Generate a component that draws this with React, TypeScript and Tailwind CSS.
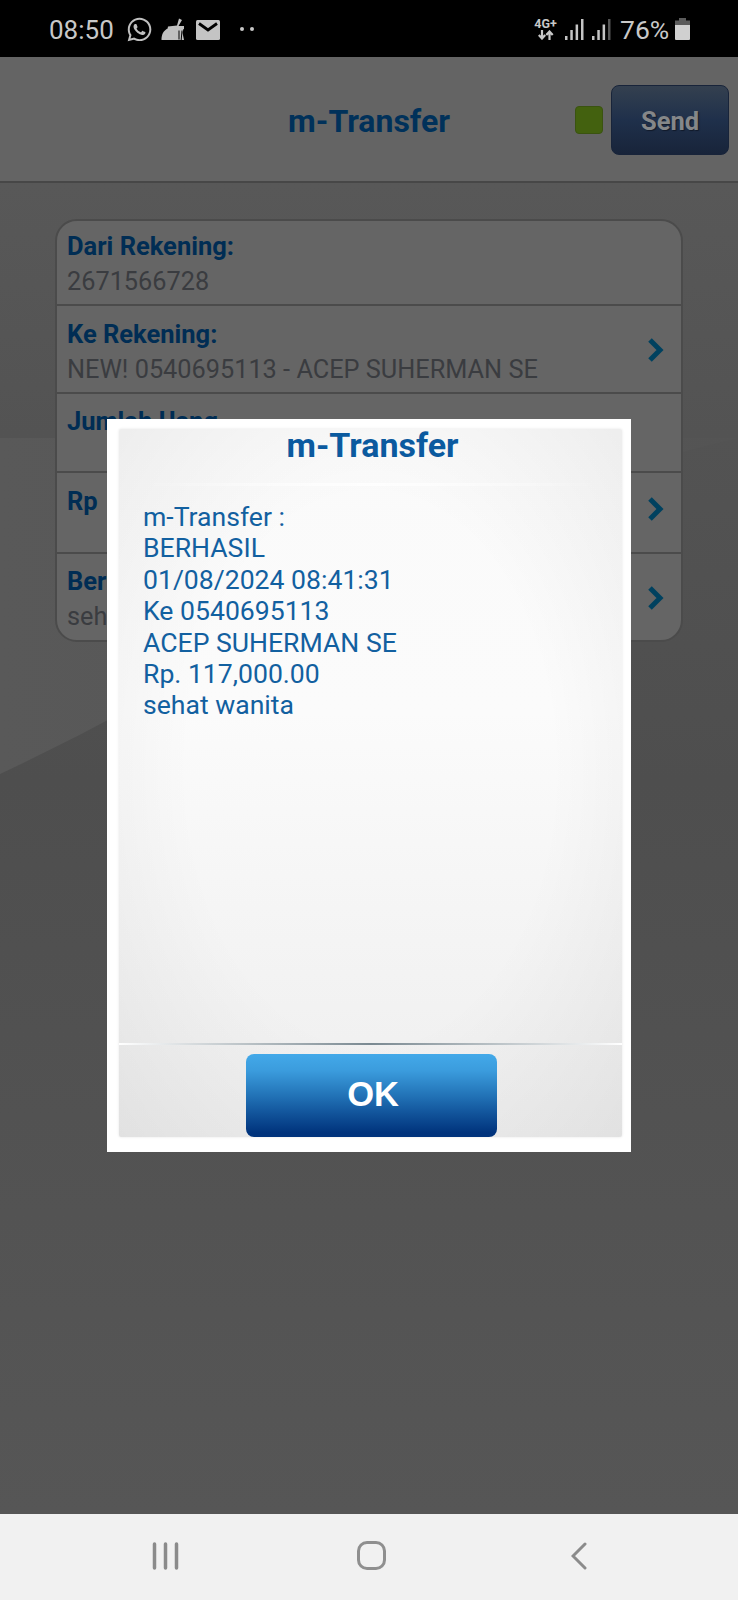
import React from "react";
import { FaWhatsapp } from "react-icons/fa";

interface FormRow {
    label: string;
    value?: string;
    layout: string;
    arrow?: string;
}

const rows: FormRow[] = [
    { label: "Dari Rekening:", value: "2671566728", layout: "h-[85px] pt-2" },
    { label: "Ke Rekening:", value: "NEW! 0540695113 - ACEP SUHERMAN SE", layout: "h-[88px] pt-[11px]", arrow: "mt-[21px]" },
    { label: "Jumlah Uang", layout: "h-[79px] pt-[10px]" },
    { label: "Rp", layout: "h-[81px] pt-[11px]", arrow: "mt-[13px]" },
    { label: "Berita:", value: "sehat wanita", layout: "h-[86px] pt-[10px]", arrow: "mt-[22px]" },
];

const messageLines = [
    "m-Transfer :",
    "BERHASIL",
    "01/08/2024 08:41:31",
    "Ke 0540695113",
    "ACEP SUHERMAN SE",
    "Rp. 117,000.00",
    "sehat wanita",
];

const StatusBar: React.FC = () => (
    <div className="h-[57px] shrink-0 bg-black flex items-center pl-[49px] pr-[48px] pt-[3px] text-[#c8c8c8] text-[26px]">
        <span className="w-[77px]">08:50</span>
        <FaWhatsapp className="size-[27px] mb-px text-[#c0c0c0]" />
        <svg className="ml-[8px] mr-[11px] w-6 h-6" viewBox="0 0 24 24" fill="#c0c0c0">
            <path d="M18 0.500l3 1.500-3.500 6H23v3H6.500l0.500-2.500 9-1z" />
            <path d="M6 10.800h16.500l-1 4 1.500 7.200H0.500c0-5.500 2-9 5.500-11.200z" />
            <path d="M18 12.500v9M21 12.500l-0.800 9.500" stroke="#000" strokeWidth="1" fill="none" />
        </svg>
        <svg className="w-6 h-5" viewBox="0 0 24 20">
            <rect width="24" height="20" rx="1.500" fill="#c4c4c4" />
            <path d="M3 3.500l9 6.500 9-6.500" fill="none" stroke="#000" strokeWidth="2.800" />
        </svg>
        <svg className="ml-5 mb-[3px] w-4 h-1" viewBox="0 0 16 4" fill="#c8c8c8">
            <circle cx="2" cy="2" r="2" />
            <circle cx="12" cy="2" r="2" />
        </svg>
        <div className="ml-auto flex items-center">
            <div className="w-[23px] mb-[3px] flex flex-col items-center">
                <span className="text-[12.5px] leading-[12px] font-bold">4G+</span>
                <svg className="w-4 h-[10px]" viewBox="0 0 16 10" fill="none" stroke="#c8c8c8" strokeWidth="2.200">
                    <path d="M4 0v8M0.800 5l3.200 3.500 3.200-3.500M11.500 10V2M8.300 5l3.200-3.500 3.200 3.500" />
                </svg>
            </div>
            <svg className="ml-2 mr-px mb-[2px] w-[46px] h-[21px]" viewBox="0 0 46 21" fill="#c4c4c4">
                <path d="M0 17h2.500v4H0zM5.300 11h2.500v10H5.300zM10.600 5.500h2.500V21h-2.500zM16 0h2.500v21H16z" />
                <path d="M27 17h2.500v4H27zM32.300 11h2.500v10h-2.500zM37.600 5.500h2.500V21h-2.500z" />
                <path d="M43 0h2.500v21H43z" fill="#555" />
            </svg>
            <span className="ml-2 w-[55px] text-[26.500px]">76%</span>
            <svg className="mb-[2px] w-[15px] h-[22px]" viewBox="0 0 15 22">
                <path d="M4 0h7v2.500h4V8H0V2.500h4z" fill="#5b5b5b" />
                <path d="M0 7h15v14q0 1-1 1H1q-1 0-1-1z" fill="#d0d0d0" />
            </svg>
        </div>
    </div>
);

const Header: React.FC = () => (
    <div className="relative h-[126px] shrink-0 grid grid-cols-[1fr_auto_1fr] items-center border-b-2 border-[#474747] bg-[#646464] pr-[9px]">
        <span />
        <h1 className="ml-[9px] pt-1 text-[32px] font-bold text-[#00315a]">m-Transfer</h1>
        <div className="flex items-center justify-end gap-2 pt-[2px]">
            <span className="size-7 -mt-px rounded-[4px] border border-[#3a5310] bg-[#43610f]" />
            <button className="w-[118px] h-[70px] pt-[3px] rounded-lg border border-[#18243a] bg-linear-to-b from-[#34404f] via-[#1f304b] to-[#18243a] text-[25.5px] font-bold text-[#858789] [text-shadow:1px_1px_1px_#111a2a]">
                Send
            </button>
        </div>
    </div>
);

// Faint light sweep behind the form
const Backdrop: React.FC = () => (
    <svg className="absolute left-0 top-[183px] w-[738px] h-[1331px]" viewBox="0 0 738 1331" preserveAspectRatio="none">
        <defs>
            <linearGradient id="base" x1="0" y1="0" x2="0" y2="1">
                <stop offset="0" stopColor="#585858" />
                <stop offset="0.190" stopColor="#535353" />
                <stop offset="0.450" stopColor="#4e4e4e" />
                <stop offset="0.700" stopColor="#525252" />
                <stop offset="1" stopColor="#565656" />
            </linearGradient>
            <linearGradient id="sweep" x1="0" y1="0" x2="1" y2="0">
                <stop offset="0" stopColor="#595959" />
                <stop offset="1" stopColor="#545454" />
            </linearGradient>
        </defs>
        <rect width="738" height="1331" fill="url(#base)" />
        <path d="M0 255H738Q500 310 260 450 130 530 0 591z" fill="url(#sweep)" />
    </svg>
);

const TransferForm: React.FC = () => (
    <div className="relative mt-9 ml-[55px] w-[628px] rounded-[22px] border-2 border-[#4b4b4b] bg-[#656565] overflow-hidden">
        {rows.map((row) => (
            <div key={row.label} className={`${row.layout} flex items-start justify-between border-b-2 border-[#4b4b4b] last:border-b-0 pl-[10px] pr-[17px]`}>
                <div className="leading-[35px]">
                    <p className="text-[25.5px] font-bold text-[#002d54]">{row.label}</p>
                    <p className="text-[25.3px] text-[#3a3c40]">{row.value}</p>
                </div>
                {row.arrow && (
                    <svg className={`${row.arrow} w-4 h-6`} viewBox="0 0 16 24" fill="none" stroke="#00415f" strokeWidth="5">
                        <path d="M2 2l10 10L2 22" />
                    </svg>
                )}
            </div>
        ))}
    </div>
);

const ResultDialog: React.FC = () => (
    <div className="absolute left-[107px] top-[419px] w-[524px] h-[733px] bg-white pt-[10px] pb-[15px] pl-3 pr-[9px]">
        <div className="h-full flex flex-col items-center rounded-[2px] bg-[radial-gradient(ellipse_80%_85%_at_50%_48%,transparent_45%,rgba(0,0,0,0.07)_100%),linear-gradient(to_bottom,#fafafa,#fbfbfb_40%,#eeeeee)] shadow-[0_0_3px_#e4e4e4]">
            <h2 className="relative left-[2px] -mt-px text-[34px] leading-[34px] font-bold text-[#0b5a9f]">m-Transfer</h2>
            <div className="mt-[21px] h-[3px] w-[460px] bg-linear-to-r from-transparent via-white/80 to-transparent" />
            <div className="self-stretch flex-1 pl-6 pt-[15px] text-[26.6px] leading-[31.4px] text-[#1260a0]">
                {messageLines.map((line) => (
                    <p key={line}>{line}</p>
                ))}
            </div>
            <div className="h-[2px] w-full bg-linear-to-r from-white via-[#7a8991] to-white" />
            <button className="mt-[9px] ml-[2px] w-[251px] h-[83px] pb-[2px] pl-[3px] shrink-0 rounded-lg bg-[linear-gradient(to_bottom,#43a9e9,#3b9cdd_20%,#2273b7_50%,#11539a_72%,#00337c_95%)] font-['Liberation_Sans',sans-serif] text-[34.5px] font-bold text-white">
                OK
            </button>
        </div>
    </div>
);

const NavBar: React.FC = () => (
    <div className="relative mt-auto h-[86px] shrink-0 bg-[#f1f1f1] flex items-center pb-[3px] pl-[152px]">
        <svg className="w-[27px] h-7" viewBox="0 0 27 28" stroke="#8b8b8b" strokeWidth="3.500" strokeLinecap="round">
            <path d="M2.500 2v24M13.500 2v24M24.500 2v24" />
        </svg>
        <span className="ml-[178px] size-[29px] rounded-[10px] border-[3px] border-[#8f8f8f]" />
        <svg className="ml-[185px] w-4 h-7" viewBox="0 0 16 28" fill="none" stroke="#8b8b8b" strokeWidth="3" strokeLinecap="round">
            <path d="M14 2L2 14l12 12" />
        </svg>
    </div>
);

export default function App() {
    return (
        <div className="relative w-[738px] h-[1600px] flex flex-col overflow-hidden bg-[#545454] font-[Roboto,sans-serif]">
            <Backdrop />
            <StatusBar />
            <Header />
            <TransferForm />
            <NavBar />
            <ResultDialog />
        </div>
    );
}
